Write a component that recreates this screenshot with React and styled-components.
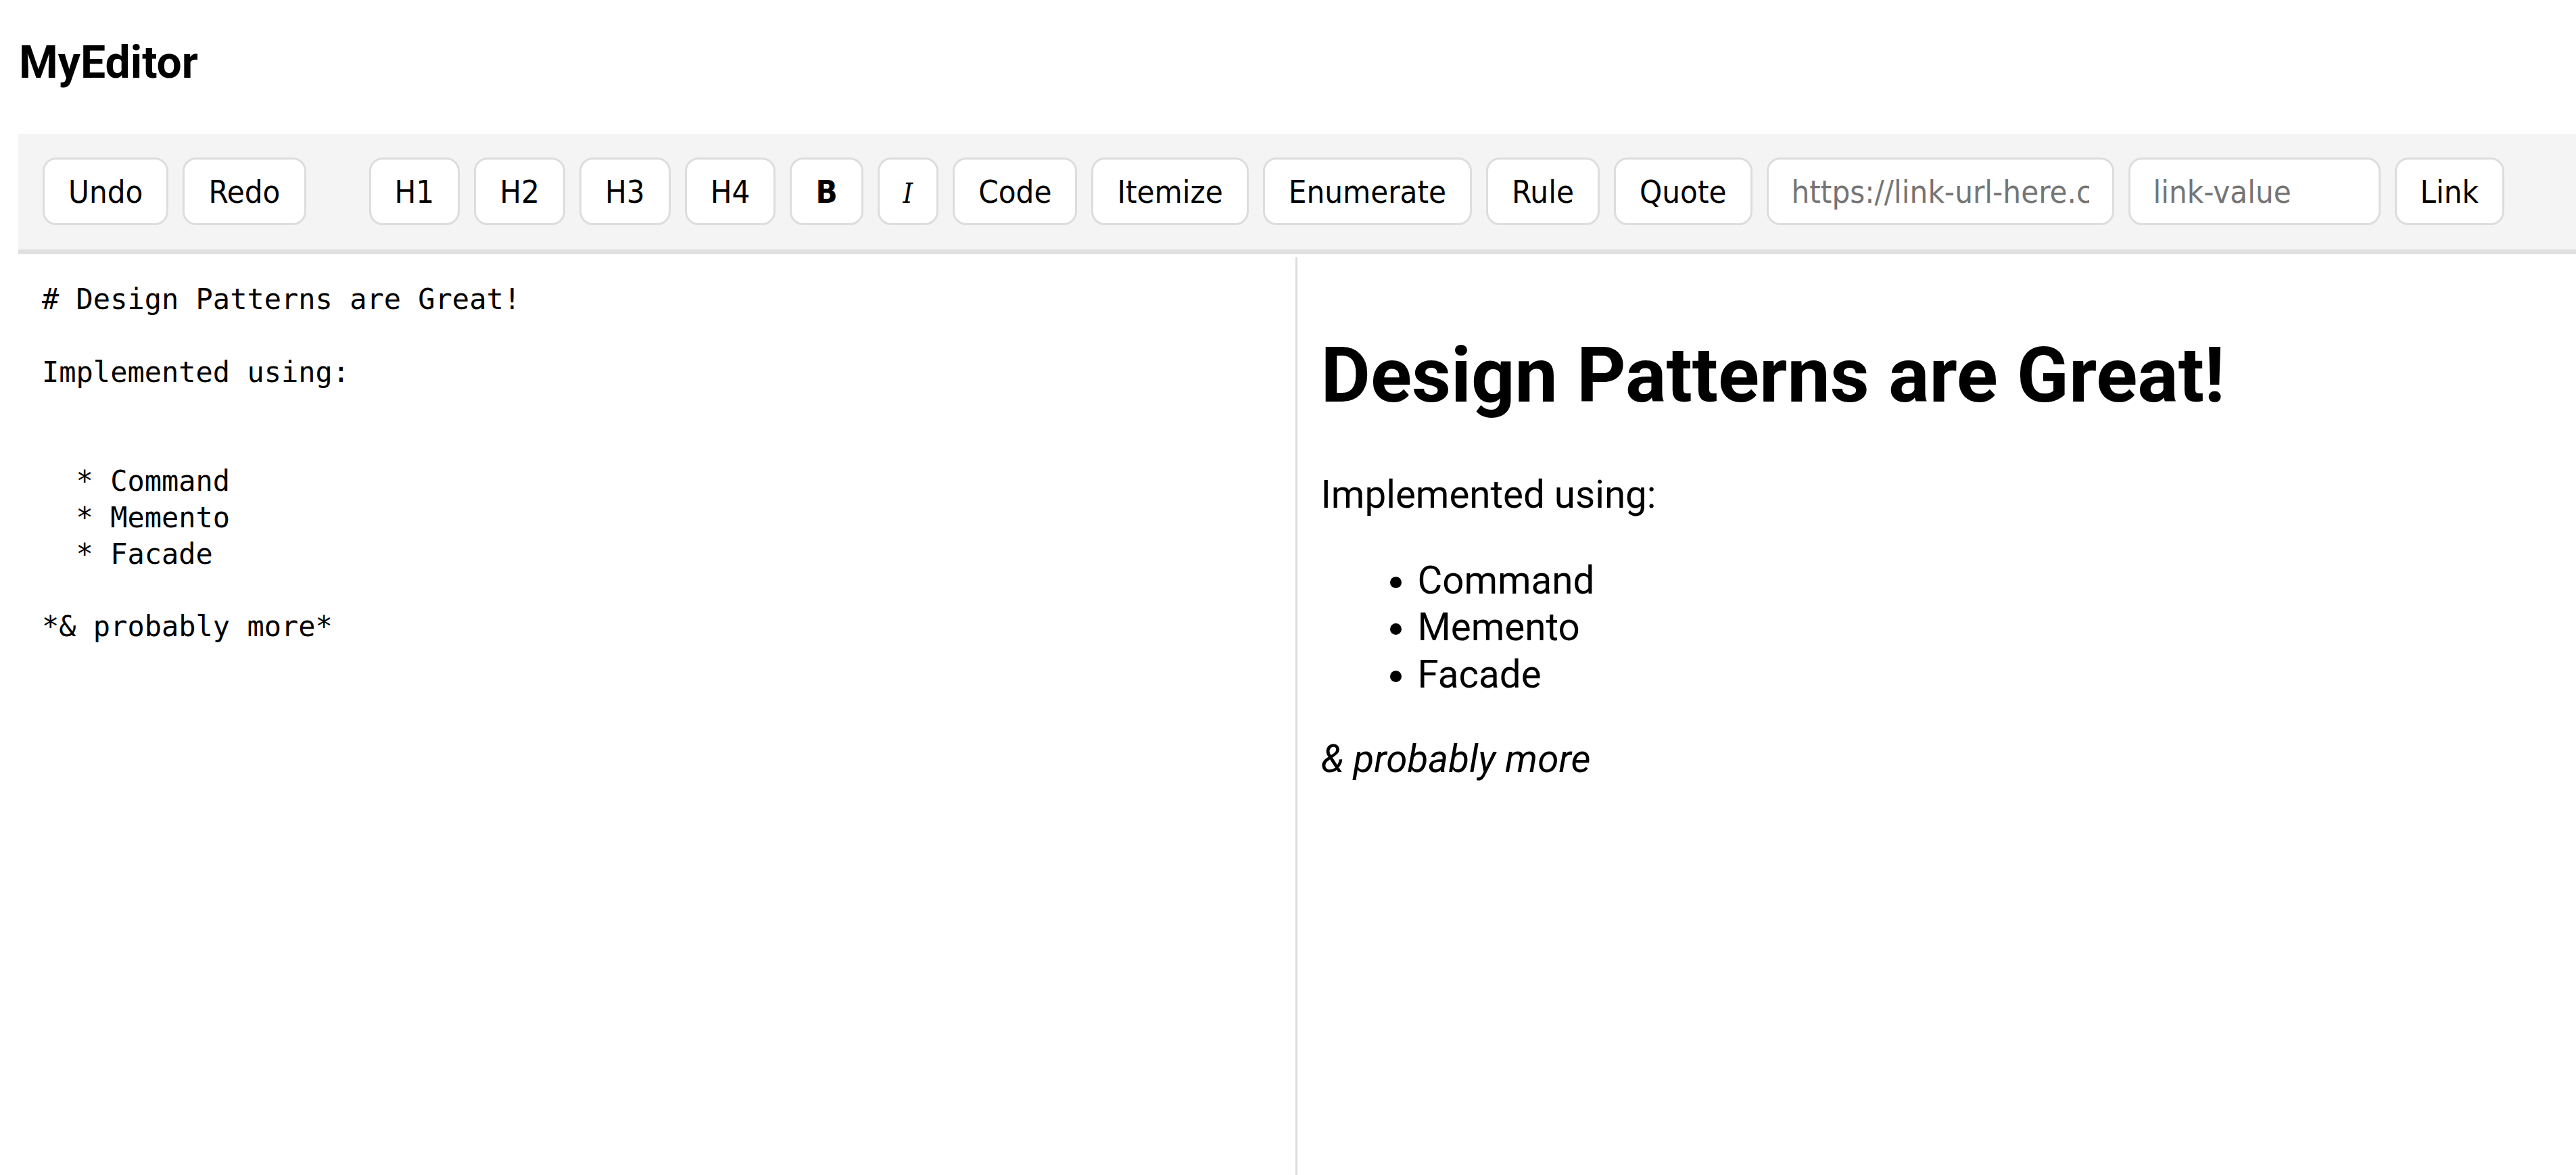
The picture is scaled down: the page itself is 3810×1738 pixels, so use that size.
import React from 'react';
import styled, { createGlobalStyle } from 'styled-components';

const GlobalStyle = createGlobalStyle`
  html, body {
    margin: 0;
    padding: 0;
    background: #ffffff;
  }
  body {
    font-family: Roboto, "Liberation Sans", sans-serif;
    color: #000;
  }
`;

const Page = styled.div`
  display: flex;
  flex-direction: column;
  height: 100vh;
  padding-left: 27px;
  box-sizing: border-box;
  overflow: hidden;
`;

const Title = styled.h1`
  margin: 53px 0 65px 1px;
  font-family: Roboto, sans-serif;
  font-weight: 700;
  font-size: 66px;
  line-height: 80px;
`;

const Toolbar = styled.div`
  display: flex;
  align-items: center;
  gap: 21px;
  padding: 35px 36px 36px 36px;
  background: #f4f4f4;
  border-bottom: 7px solid #e0e0e0;
`;

const Group = styled.div`
  display: flex;
  align-items: center;
  gap: 21px;
  margin-right: ${(p) => p.$spacing || 0}px;
`;

const ToolButton = styled.button`
  height: 100px;
  box-sizing: border-box;
  padding: 0 35px;
  background: #ffffff;
  border: 3px solid #dddddd;
  border-radius: 20px;
  font-family: "DejaVu Sans Condensed", "DejaVu Sans", sans-serif;
  font-stretch: condensed;
  font-size: 47px;
  font-weight: ${(p) => (p.$bold ? 700 : 400)};
  color: #000;
  cursor: pointer;
  white-space: nowrap;
`;

const SerifItalic = styled.span`
  font-family: "DejaVu Serif", "Liberation Serif", serif;
  font-style: italic;
  font-size: 41px;
`;

const LinkInput = styled.input`
  width: ${(p) => p.$width}px;
  height: 100px;
  box-sizing: border-box;
  padding: 0 34px;
  background: #ffffff;
  border: 3px solid #dddddd;
  border-radius: 20px;
  font-family: "DejaVu Sans Condensed", "DejaVu Sans", sans-serif;
  font-stretch: condensed;
  font-size: 47px;
  color: #000;
  outline: none;

  &::placeholder {
    color: #757575;
  }
`;

const Workspace = styled.div`
  flex: 1;
  display: grid;
  grid-template-columns: 1fr 1fr;
  margin-top: 4px;
  min-height: 0;
`;

const Source = styled.textarea`
  display: block;
  box-sizing: border-box;
  width: 100%;
  height: 100%;
  margin: 0;
  padding: 36px 35px;
  border: none;
  border-right: 3px solid #dddddd;
  resize: none;
  outline: none;
  font-family: "DejaVu Sans Mono", "Liberation Mono", monospace;
  font-size: 42px;
  line-height: 53.8px;
  color: #000;
  background: #fff;
`;

const Preview = styled.div`
  box-sizing: border-box;
  padding: 0 35px 35px 35px;
  font-family: Roboto, sans-serif;
  font-size: 56.5px;
  line-height: 69.5px;
  overflow: hidden;
`;

const PreviewHeading = styled.h1`
  margin: 109px 0 75px 0;
  font-size: 113px;
  font-weight: 700;
  line-height: 134px;
`;

const Paragraph = styled.p`
  margin: 0 0 57px 0;
`;

const List = styled.ul`
  margin: 0 0 56px 0;
  padding-left: 143px;
`;

const source = `# Design Patterns are Great!

Implemented using:


  * Command
  * Memento
  * Facade

*& probably more*`;

const App = () => {
  return (
    <>
      <GlobalStyle />
      <Page>
        <Title>MyEditor</Title>
        <Toolbar>
          <Group $spacing={72}>
            <ToolButton>Undo</ToolButton>
            <ToolButton>Redo</ToolButton>
          </Group>
          <ToolButton>H1</ToolButton>
          <ToolButton>H2</ToolButton>
          <ToolButton>H3</ToolButton>
          <ToolButton>H4</ToolButton>
          <ToolButton $bold>B</ToolButton>
          <ToolButton>
            <SerifItalic>I</SerifItalic>
          </ToolButton>
          <ToolButton>Code</ToolButton>
          <ToolButton>Itemize</ToolButton>
          <ToolButton>Enumerate</ToolButton>
          <ToolButton>Rule</ToolButton>
          <ToolButton>Quote</ToolButton>
          <LinkInput $width={514} placeholder="https://link-url-here.com" />
          <LinkInput $width={373} placeholder="link-value" />
          <ToolButton>Link</ToolButton>
        </Toolbar>
        <Workspace>
          <Source defaultValue={source} spellCheck={false} />
          <Preview>
            <PreviewHeading>Design Patterns are Great!</PreviewHeading>
            <Paragraph>Implemented using:</Paragraph>
            <List>
              <li>Command</li>
              <li>Memento</li>
              <li>Facade</li>
            </List>
            <Paragraph>
              <em>&amp; probably more</em>
            </Paragraph>
          </Preview>
        </Workspace>
      </Page>
    </>
  );
};

export default App;
